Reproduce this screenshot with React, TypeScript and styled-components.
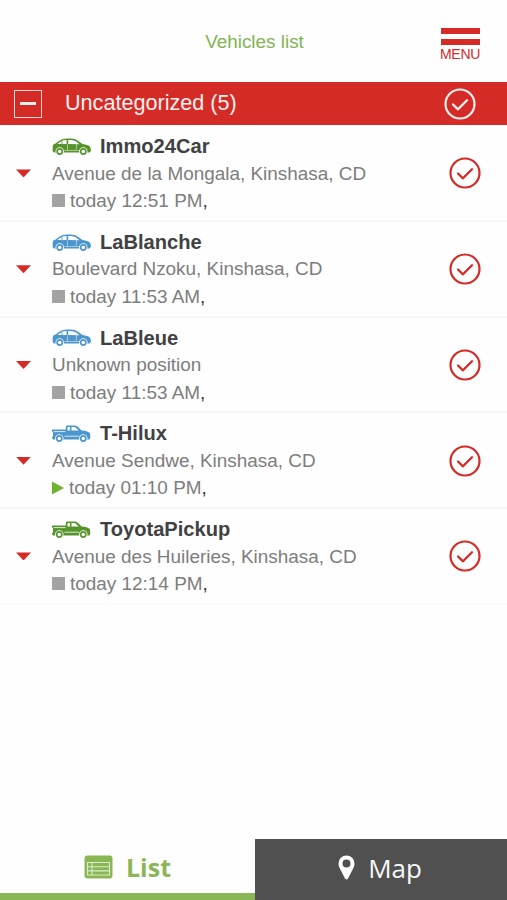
import React from "react";
import styled, { createGlobalStyle } from "styled-components";

const RED = "#d52b27";
const GREEN = "#8ab755";

const GlobalStyle = createGlobalStyle`
  * { box-sizing: border-box; }
  body { margin: 0; background: #fefefe; font-family: "Liberation Sans", Arial, sans-serif; }
`;

const Screen = styled.div`
  display: flex;
  flex-direction: column;
  width: 507px;
  height: 900px;
  overflow: hidden;
  background: #fefefe;
`;

const TopBar = styled.header`
  display: grid;
  grid-template-columns: 94px 1fr 94px;
  flex: none;
  height: 82px;
`;

const Title = styled.h1`
  grid-column: 2;
  margin: 0;
  padding: 30px 0 0 2px;
  font-size: 18.9px;
  line-height: 24px;
  font-weight: 400;
  text-align: center;
  white-space: nowrap;
  color: #81b552;
`;

const MenuButton = styled.button`
  display: flex;
  flex-direction: column;
  align-items: center;
  gap: 5px;
  padding: 28px 0 0;
  border: 0;
  background: none;
  font: 14px/16px "Liberation Sans", Arial, sans-serif;
  letter-spacing: -0.3px;
  color: ${RED};
`;

const MenuBar = styled.span`
  width: 39px;
  height: 6px;
  background: ${RED};
`;

const MenuLabel = styled.span`
  margin-top: -4px;
`;

const GroupHeader = styled.div`
  display: grid;
  grid-template-columns: 65px 1fr 95px;
  align-items: center;
  flex: none;
  height: 43px;
  background: ${RED};
  color: #fff0ee;
`;

const Collapse = styled.span`
  display: grid;
  place-items: center;
  width: 28px;
  height: 28px;
  margin-left: 14px;
  border: 1.5px solid #ffd6d2;

  &::after {
    content: "";
    width: 16px;
    height: 3px;
    background: #fff0ee;
  }
`;

const GroupName = styled.span`
  padding-bottom: 1px;
  font-size: 21.6px;
  line-height: 26px;
  white-space: nowrap;
`;

const CheckCell = styled.span`
  display: flex;
  justify-content: center;
  svg { display: block; }
`;

const VehicleList = styled.section`
  padding-top: 1px;
`;

const VehicleRow = styled.article`
  display: grid;
  grid-template-columns: 52px 1fr 84px;
  align-items: center;
  height: 95.75px;
  padding-top: 1px;
  border-bottom: 2px solid #f7f7f7;

  &:last-child { border-bottom-color: #fbfbfb; }
`;

const Expand = styled.span`
  width: 15px;
  height: 8px;
  margin-left: 16px;
  background: ${RED};
  clip-path: polygon(0 0, 100% 0, 50% 100%);
`;

const Details = styled.div`
  display: flex;
  flex-direction: column;
  white-space: nowrap;
  font-size: 18.93px;
  line-height: 27.3px;
  color: #7d7d7d;
`;

const NameLine = styled.div`
  display: flex;
  align-items: center;
  gap: 8px;
  margin: 0.8px 0 -0.8px;
  color: #414144;
  font-weight: 700;
  font-size: 20.1px;
  svg { display: block; flex: none; }
`;

const StatusLine = styled.div`
  display: flex;
  align-items: center;
`;

const Comma = styled.span`
  color: #333;
`;

const Stopped = styled.span`
  width: 13px;
  height: 13px;
  margin-right: 5px;
  background: #a3a3a3;
`;

const Moving = styled.span`
  width: 12px;
  height: 13px;
  margin-right: 5px;
  background: #6eb32b;
  clip-path: polygon(0 0, 100% 50%, 0 100%);
`;

const Tabs = styled.nav`
  display: grid;
  grid-template-columns: 255px 1fr;
  flex: none;
  height: 61px;
  margin-top: auto;
`;

const Tab = styled.div<{ $active?: boolean }>`
  display: flex;
  align-items: center;
  justify-content: center;
  gap: 13px;
  padding: ${(p) => (p.$active ? "2px 0 0" : "0 2px 4px 0")};
  border-bottom: ${(p) => (p.$active ? `7px solid ${GREEN}` : "0")};
  background: ${(p) => (p.$active ? "transparent" : "#505050")};
  color: ${(p) => (p.$active ? GREEN : "#f8f8f8")};
  font-family: "Open Sans", "Noto Sans", sans-serif;
  font-size: ${(p) => (p.$active ? 25 : 26)}px;
  line-height: 36px;
  font-weight: ${(p) => (p.$active ? 700 : 400)};
`;

const CheckCircle = ({ color }: { color: string }) => (
  <svg width="32" height="32" viewBox="0 0 32 32" fill="none" stroke={color} strokeLinecap="round" strokeLinejoin="round">
    <circle cx="16" cy="16" r="14.5" strokeWidth="2.2" />
    <path d="M9 16.5l5 4.8 9-9" strokeWidth="2.3" />
  </svg>
);

const Wheel = ({ x, color }: { x: number; color: string }) => (
  <>
    <circle cx={x} cy="13.5" r="4.2" fill="#fefefe" />
    <circle cx={x} cy="13.5" r="2.6" fill="#fefefe" stroke={color} strokeWidth="1.6" />
  </>
);

const CarIcon = ({ color }: { color: string }) => (
  <svg width="40" height="18" viewBox="0 0 40 18">
    <path d="M.8 7.500Q1.200 6.200 3.500 5.500L8 2.300Q10.500.6 15 .6h4q4 0 7 2.100L30.500 6q5.500.6 7.600 2.800l1 3.800-1.500 2H2L.6 13z" fill={color} />
    <path d="M5.300 6.100L9.200 3.200Q11 1.900 14.600 1.900v4.200zM16.200 1.900h2.600q3.200.1 5.400 1.700l3.300 2.700-11.300-.2z" fill="#fefefe" />
    <path d="M9.600 2.500L10.300 6.300M15.500 6.300v6M24.500 4v6.500L23 12.300M12.500 12.500h14.500" fill="none" stroke="#dfeadf" strokeWidth=".6" />
    <path d="M9.600 2.500L10.300 6.300" stroke={color} strokeWidth=".8" />
    <Wheel x={7.700} color={color} />
    <Wheel x={31.300} color={color} />
  </svg>
);

const PickupIcon = ({ color }: { color: string }) => (
  <svg width="40" height="18" viewBox="0 0 40 18">
    <path d="M0 4.500h13.800V1.700Q13.800.4 15.100.4h7.500q2 0 3.300 1.300L29.600 5.500q7 .5 8.300 2.700l.5 4.200-1 2H1L-.3 12.500l1.300-1V6.700H0z" fill={color} />
    <path d="M15.500 1.900h2.400v3.700h-2.400zM19.500 1.900h2.700q1 0 1.700.8l2.800 2.900h-7.200z" fill="#fefefe" />
    <path d="M1.500 6.600h12M12.500 11.200h14.500" stroke="#edf3ed" strokeWidth=".9" />
    <Wheel x={7.300} color={color} />
    <Wheel x={31.300} color={color} />
  </svg>
);

const ListIcon = () => (
  <svg width="29" height="24" viewBox="0 0 29 24">
    <rect x=".5" y=".5" width="28" height="23" rx="3" fill={GREEN} />
    <path d="M3.500 7.500h22v12.500h-22zM3.500 11.700h22M3.500 15.900h22M8 7.500v12.500" fill="none" stroke="#dcebca" strokeWidth="1.100" />
  </svg>
);

const PinIcon = () => (
  <svg width="17" height="25" viewBox="0 0 17 25">
    <path fillRule="evenodd" d="M8.500.5a8 8 0 0 0-8 8c0 2 .5 3.200 1.200 4.700L7 23.500q1.500 2 3 0l5.300-10.300c.7-1.500 1.200-2.700 1.200-4.700a8 8 0 0 0-8-8zm0 4a4 4 0 1 1 0 8 4 4 0 0 1 0-8z" fill="#fff" />
  </svg>
);

const BODY_COLORS = { green: "#56942b", blue: "#4b96cd" };

type Vehicle = {
  name: string;
  place: string;
  time: string;
  kind: "car" | "pickup";
  color: keyof typeof BODY_COLORS;
  moving?: boolean;
};

const vehicles: Vehicle[] = [
  { name: "Immo24Car", place: "Avenue de la Mongala, Kinshasa, CD", time: "today 12:51 PM", kind: "car", color: "green" },
  { name: "LaBlanche", place: "Boulevard Nzoku, Kinshasa, CD", time: "today 11:53 AM", kind: "car", color: "blue" },
  { name: "LaBleue", place: "Unknown position", time: "today 11:53 AM", kind: "car", color: "blue" },
  { name: "T-Hilux", place: "Avenue Sendwe, Kinshasa, CD", time: "today 01:10 PM", kind: "pickup", color: "blue", moving: true },
  { name: "ToyotaPickup", place: "Avenue des Huileries, Kinshasa, CD", time: "today 12:14 PM", kind: "pickup", color: "green" },
];

export default function App() {
  return (
    <>
      <GlobalStyle />
      <Screen>
        <TopBar>
          <Title>Vehicles list</Title>
          <MenuButton>
            <MenuBar />
            <MenuBar />
            <MenuLabel>MENU</MenuLabel>
          </MenuButton>
        </TopBar>
        <GroupHeader>
          <Collapse />
          <GroupName>Uncategorized (5)</GroupName>
          <CheckCell><CheckCircle color="#fff0ee" /></CheckCell>
        </GroupHeader>
        <VehicleList>
          {vehicles.map((v) => {
            const Icon = v.kind === "car" ? CarIcon : PickupIcon;
            return (
              <VehicleRow key={v.name}>
                <Expand />
                <Details>
                  <NameLine>
                    <Icon color={BODY_COLORS[v.color]} />
                    {v.name}
                  </NameLine>
                  <div>{v.place}</div>
                  <StatusLine>
                    {v.moving ? <Moving /> : <Stopped />}
                    {v.time}
                    <Comma>,</Comma>
                  </StatusLine>
                </Details>
                <CheckCell><CheckCircle color={RED} /></CheckCell>
              </VehicleRow>
            );
          })}
        </VehicleList>
        <Tabs>
          <Tab $active>
            <ListIcon />
            List
          </Tab>
          <Tab>
            <PinIcon />
            Map
          </Tab>
        </Tabs>
      </Screen>
    </>
  );
}
